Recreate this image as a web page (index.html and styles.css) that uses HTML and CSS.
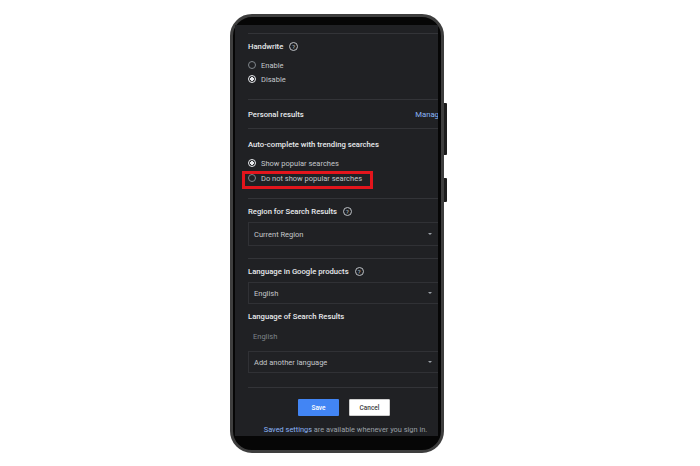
FILE: index.html
```html
<!DOCTYPE html>
<html lang="en">
<head>
<meta charset="utf-8">
<title>Search settings</title>
<link rel="stylesheet" href="styles.css">
</head>
<body>
<div class="stage">
  <div class="phone">
    <span class="side-btn side-btn-1"></span>
    <span class="side-btn side-btn-2"></span>
    <div class="screen">
      <div class="content">
        <section class="section s-handwrite">
          <div class="title">Handwrite<span class="help">?</span></div>
          <div class="options opts-tight">
            <div class="option"><span class="radio"></span>Enable</div>
            <div class="option"><span class="radio checked"></span>Disable</div>
          </div>
        </section>
        <section class="section s-personal">
          <div class="title row-between"><span>Personal results</span><span class="link">Manage</span></div>
        </section>
        <section class="section s-auto">
          <div class="title">Auto-complete with trending searches</div>
          <div class="options opts-loose">
            <div class="option"><span class="radio checked"></span>Show popular searches</div>
            <div class="option highlighted"><span class="radio"></span>Do not show popular searches<span class="annot"></span></div>
          </div>
        </section>
        <section class="section s-region">
          <div class="title">Region for Search Results<span class="help">?</span></div>
          <div class="select select-tall"><span>Current Region</span><span class="caret"></span></div>
        </section>
        <section class="section s-lang">
          <div class="title">Language in Google products<span class="help">?</span></div>
          <div class="select"><span>English</span><span class="caret"></span></div>
          <div class="title t-sub">Language of Search Results</div>
          <div class="dim">English</div>
          <div class="select s-add"><span>Add another language</span><span class="caret"></span></div>
        </section>
        <section class="section s-actions">
          <div class="buttons">
            <span class="btn btn-save">Save</span>
            <span class="btn btn-cancel">Cancel</span>
          </div>
          <div class="note"><span class="link">Saved settings</span> are available whenever you sign in.</div>
        </section>
      </div>
    </div>
  </div>
</div>
</body>
</html>
```
FILE: styles.css
```css
html, body {
  margin: 0;
  padding: 0;
  background: #ffffff;
}
body {
  font-family: Roboto, "Liberation Sans", Arial, sans-serif;
}
.stage {
  padding: 14px 0 0 230px;
}
.phone {
  position: relative;
  box-sizing: border-box;
  width: 214px;
  height: 439px;
  border: 3px solid #3e3e3e;
  border-radius: 22px;
  background: #060606;
  padding: 8px 3px 14px 2px;
}
.side-btn {
  position: absolute;
  right: -6px;
  width: 3px;
  background: #1c1c1c;
  border-radius: 0 1px 1px 0;
}
.side-btn-1 { top: 86px; height: 52px; }
.side-btn-2 { top: 161px; height: 24px; }
.screen {
  height: 100%;
  background: #202124;
  overflow: hidden;
  padding-top: 8px;
  box-sizing: border-box;
}
.content {
  width: 195px;
  margin-left: 13px;
}
.section {
  border-top: 1px solid #333438;
  display: flex;
  flex-direction: column;
}
.title {
  box-sizing: border-box;
  height: 14px;
  padding-top: 1px;
  font-size: 7.7px;
  font-weight: 500;
  color: #e8eaed;
  display: flex;
  align-items: center;
  white-space: nowrap;
}
.row-between {
  justify-content: space-between;
}
.link {
  color: #8ab4f8;
  font-weight: 400;
}
.help {
  display: inline-flex;
  align-items: center;
  justify-content: center;
  box-sizing: border-box;
  width: 9px;
  height: 9px;
  margin-left: 6px;
  border: 1px solid #bdc1c6;
  border-radius: 50%;
  font-size: 6px;
  font-weight: 400;
  line-height: 1;
  color: #bdc1c6;
}
.options {
  display: flex;
  flex-direction: column;
}
.opts-tight { margin-top: 5px; }
.opts-loose { margin-top: 5px; gap: 1px; }
.option {
  position: relative;
  height: 14px;
  display: flex;
  align-items: center;
  font-size: 7.5px;
  color: #c4c7cb;
  white-space: nowrap;
}
.radio {
  box-sizing: border-box;
  width: 8px;
  height: 8px;
  margin-right: 5px;
  border: 1px solid #80868b;
  border-radius: 50%;
}
.radio.checked {
  border-color: #e8eaed;
  background: radial-gradient(circle, #e8eaed 0 1.6px, transparent 2.1px);
}
.annot {
  position: absolute;
  left: -6px;
  top: 0;
  width: 131px;
  height: 18px;
  box-sizing: border-box;
  border: 3px solid #e3151c;
}
.s-handwrite { padding: 5px 0 13px; }
.s-personal { padding: 7px 0 7px; }
.s-auto { padding: 8px 0 13px; }
.s-region { padding: 5px 0 12px; }
.s-lang { padding: 5px 0 14px; }
.s-actions { padding: 11px 0 0; }
.select {
  margin-top: 4px;
  box-sizing: border-box;
  height: 22px;
  border: 1px solid #303135;
  display: flex;
  align-items: center;
  justify-content: space-between;
  padding: 0 10px 0 5px;
  font-size: 7.5px;
  color: #c4c7cb;
  white-space: nowrap;
}
.select-tall { height: 24px; }
.caret {
  width: 0;
  height: 0;
  border-left: 2.5px solid transparent;
  border-right: 2.5px solid transparent;
  border-top: 2.5px solid #9aa0a6;
}
.t-sub { margin-top: 5px; }
.dim {
  margin-top: 7px;
  height: 14px;
  line-height: 14px;
  padding-left: 5px;
  font-size: 7.5px;
  color: #7f858a;
}
.s-add { margin-top: 7px; }
.buttons {
  display: flex;
  justify-content: center;
  gap: 10px;
  padding-right: 3px;
}
.btn {
  box-sizing: border-box;
  width: 41px;
  height: 17px;
  display: flex;
  align-items: center;
  justify-content: center;
  font-size: 6.5px;
  font-weight: 500;
  border-radius: 1px;
}
.btn-save {
  background: #4285f4;
  color: #ffffff;
}
.btn-cancel {
  background: #ffffff;
  border: 1px solid #d0d0d0;
  color: #3c4043;
}
.note {
  margin-top: 8px;
  height: 12px;
  line-height: 12px;
  text-align: center;
  font-size: 7.4px;
  color: #9aa0a6;
  white-space: nowrap;
}
```
